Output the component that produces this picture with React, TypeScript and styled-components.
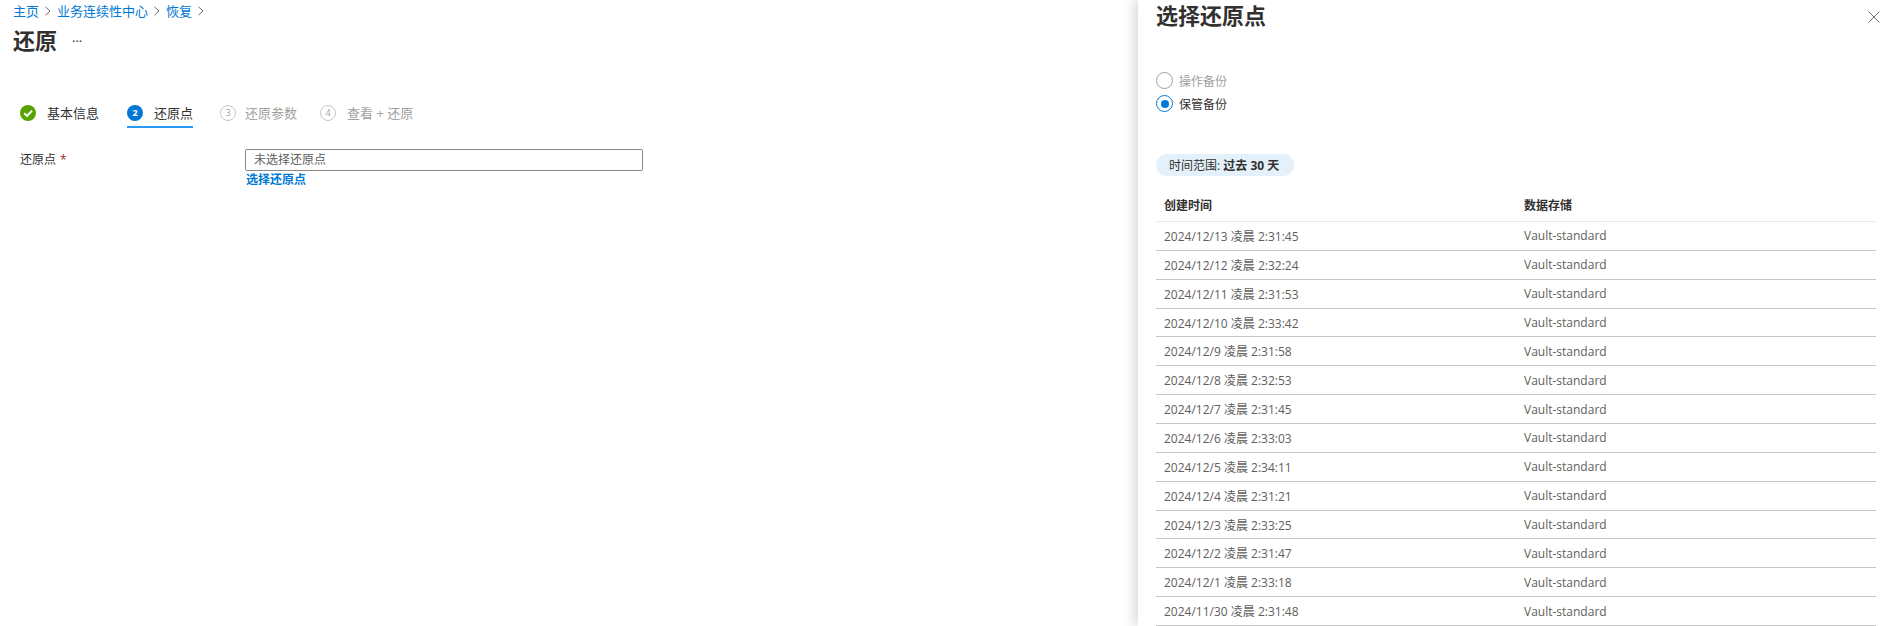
import React from "react";
import styled, { createGlobalStyle } from "styled-components";

const Global = createGlobalStyle`
  html, body { margin: 0; padding: 0; height: 626px; overflow: hidden; background: #fff; }
  body { font-family: "Open Sans", "Noto Sans CJK SC", sans-serif; font-size: 13px; color: #323130; }
  * { box-sizing: border-box; }
`;
const Page = styled.div`display: flex; width: 1887px; height: 626px; overflow: hidden;`;
const Main = styled.main`flex: 0 0 1138px; padding: 1px 0 0 13px;`;
const Crumbs = styled.nav`display: flex; align-items: center; gap: 5px; height: 20px; color: #0078d4;`;
const Crumb = styled.span`line-height: 20px;`;
const PageTitle = styled.div`display: flex; align-items: center; gap: 15px; height: 38px;`;
const H1 = styled.h1`margin: 0; font-size: 22px; font-weight: 700; line-height: 38px; color: #323130;`;
const Dots = styled.span`font-size: 13px; line-height: 24px; margin-top: 2px; color: #323130;`;
const Steps = styled.div`display: flex; margin: 39px 0 0 7px; height: 38px; align-items: flex-start;`;
const StepInner = styled.div<{ $active?: boolean; $off?: boolean; $gap: number; $mr: number }>`
  display: flex; align-items: center; gap: ${p => p.$gap}px; height: 30px; padding-top: 1px; margin-right: ${p => p.$mr}px;
  border-bottom: 2px solid ${p => (p.$active ? "#2899f5" : "transparent")};
  color: ${p => (p.$off ? "#a19f9d" : "#323130")};
`;
const Num = styled.span<{ $active?: boolean }>`
  width: 16px; height: 16px; border-radius: 50%; display: flex; align-items: center; justify-content: center;
  font-size: 9px; font-weight: ${p => (p.$active ? 700 : 400)};
  background: ${p => (p.$active ? "#0078d4" : "#fff")};
  color: ${p => (p.$active ? "#fff" : "#a19f9d")};
  border: ${p => (p.$active ? "none" : "1px solid #c8c6c4")};
`;
const FormRow = styled.div`display: grid; grid-template-columns: 225px 398px; margin: 13px 0 0 7px;`;
const Label = styled.label`font-size: 12px; line-height: 22px; color: #323130;`;
const Star = styled.span`color: #a4262c; margin-left: 4px;`;
const Field = styled.div`
  height: 22px; border: 1px solid #8a8886; border-radius: 2px; padding-left: 8px; font-size: 12px; line-height: 20px; color: #605e5c;
`;
const FieldLink = styled.a`display: block; color: #0078d4; font-weight: 700; font-size: 12px; line-height: 18px; margin-left: 1px;`;
const Panel = styled.aside`
  position: relative; flex: 0 0 749px; padding: 0 11px 0 18px;
  box-shadow: -4px 0 12px rgba(0,0,0,0.16); background: #fff;
`;
const PanelTitle = styled.h2`margin: -1px 0 0; font-size: 22px; font-weight: 700; line-height: 32px; color: #323130;`;
const Close = styled.button`
  position: absolute; top: 11px; right: 7px; width: 12px; height: 12px; border: 0; padding: 0; background: none; display: flex;
`;
const Radios = styled.div`display: flex; flex-direction: column; gap: 6px; margin-top: 41px;`;
const RadioRow = styled.div<{ $off?: boolean }>`
  display: flex; align-items: center; gap: 6px; height: 17px; color: ${p => (p.$off ? "#a19f9d" : "#323130")}; font-size: 12px;
`;
const Dot = styled.span<{ $on?: boolean }>`
  width: 17px; height: 17px; border-radius: 50%; display: flex; align-items: center; justify-content: center;
  border: 1px solid ${p => (p.$on ? "#0078d4" : "#a19f9d")};
  &::after { content: ""; width: 8px; height: 8px; border-radius: 50%; background: ${p => (p.$on ? "#0078d4" : "transparent")}; }
`;
const Chip = styled.div`
  display: inline-flex; align-items: center; height: 22px; width: 138px; margin-top: 42px; padding-left: 13px;
  background: #e5f1fa; border-radius: 11px; font-size: 12px; color: #323130; white-space: pre;
`;
const B = styled.b`font-weight: 700;`;
const Table = styled.div`margin-top: 13px;`;
const Row = styled.div<{ $head?: boolean }>`
  display: grid; grid-template-columns: 360px 1fr; align-items: center; padding-left: 8px;
  height: ${p => (p.$head ? "33px" : "28.86px")};
  border-bottom: 1px solid ${p => (p.$head ? "#e8e8e8" : "#c8c6c4")};
  color: ${p => (p.$head ? "#323130" : "#605e5c")};
  font-size: 12px; font-weight: ${p => (p.$head ? 600 : 400)};
`;

const rows = [
  "2024/12/13 凌晨 2:31:45","2024/12/12 凌晨 2:32:24","2024/12/11 凌晨 2:31:53","2024/12/10 凌晨 2:33:42",
  "2024/12/9 凌晨 2:31:58","2024/12/8 凌晨 2:32:53","2024/12/7 凌晨 2:31:45","2024/12/6 凌晨 2:33:03",
  "2024/12/5 凌晨 2:34:11","2024/12/4 凌晨 2:31:21","2024/12/3 凌晨 2:33:25","2024/12/2 凌晨 2:31:47",
  "2024/12/1 凌晨 2:33:18","2024/11/30 凌晨 2:31:48",
];

const Chevron = () => (
  <svg width="8" height="10" viewBox="0 0 8 10" fill="none" stroke="#605e5c" strokeWidth="0.9"><path d="M1.5 0.8 6 5 1.5 9.2" /></svg>
);
const Check = () => (
  <svg width="16" height="16" viewBox="0 0 16 16"><circle cx="8" cy="8" r="8" fill="#57a300" /><path d="M4.2 8.2 7 11l5-5.4" fill="none" stroke="#fff" strokeWidth="2" /></svg>
);

export default function App() {
  return (
    <Page>
      <Global />
      <Main>
        <Crumbs>
          <Crumb>主页</Crumb><Chevron /><Crumb>业务连续性中心</Crumb><Chevron /><Crumb>恢复</Crumb><Chevron />
        </Crumbs>
        <PageTitle><H1>还原</H1><Dots>···</Dots></PageTitle>
        <Steps>
          <StepInner $gap={11} $mr={28}><Check /><span>基本信息</span></StepInner>
          <StepInner $active $gap={11} $mr={27}><Num $active>2</Num><span>还原点</span></StepInner>
          <StepInner $off $gap={9} $mr={23}><Num>3</Num><span>还原参数</span></StepInner>
          <StepInner $off $gap={11} $mr={0}><Num>4</Num><span>查看 + 还原</span></StepInner>
        </Steps>
        <FormRow>
          <Label>还原点<Star>*</Star></Label>
          <div>
            <Field>未选择还原点</Field>
            <FieldLink>选择还原点</FieldLink>
          </div>
        </FormRow>
      </Main>
      <Panel>
        <PanelTitle>选择还原点</PanelTitle>
        <Close aria-label="close">
          <svg width="12" height="12" viewBox="0 0 12 12" stroke="#605e5c" strokeWidth="0.9"><path d="M0.5 0.5 11.5 11.5M11.5 0.5 0.5 11.5" /></svg>
        </Close>
        <Radios>
          <RadioRow $off><Dot /><span>操作备份</span></RadioRow>
          <RadioRow><Dot $on /><span>保管备份</span></RadioRow>
        </Radios>
        <Chip>时间范围: <B>过去 30 天</B></Chip>
        <Table>
          <Row $head><span>创建时间</span><span>数据存储</span></Row>
          {rows.map(r => (
            <Row key={r}><span>{r}</span><span>Vault-standard</span></Row>
          ))}
        </Table>
      </Panel>
    </Page>
  );
}
